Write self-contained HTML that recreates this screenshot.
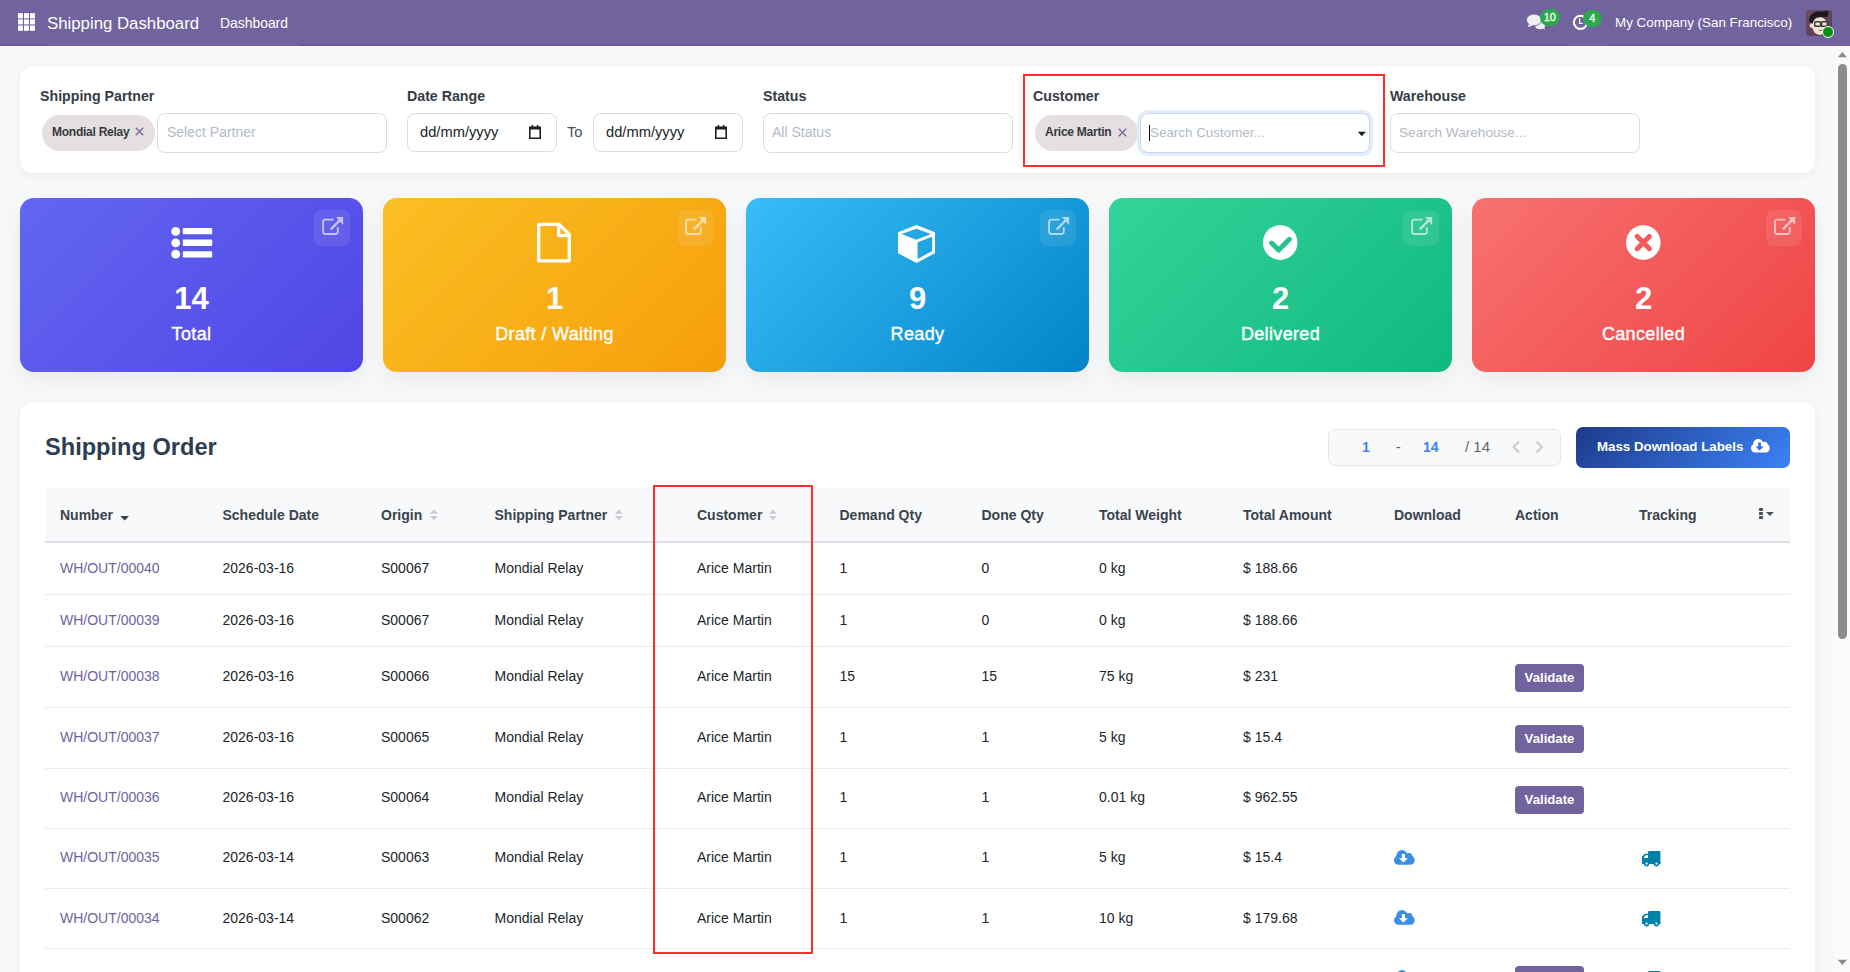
<!DOCTYPE html>
<html><head><meta charset="utf-8">
<style>
*{box-sizing:border-box;margin:0;padding:0}
html,body{width:1850px;height:972px;overflow:hidden}
body{font-family:"Liberation Sans",sans-serif;background:#f7f8fa;position:relative;color:#212529}
.a{position:absolute;white-space:nowrap}
.nav{position:absolute;left:0;top:0;width:1850px;height:46px;background:#71639e}
.navline{position:absolute;top:45px;height:1px;background:#5f5289}
.wl{position:absolute;left:0;top:46px;width:1835px;height:1px;background:#fff}
.card{position:absolute;background:#fff;border-radius:12px;box-shadow:0 2px 8px rgba(0,0,0,0.05)}
.lbl{position:absolute;font-weight:bold;font-size:14.2px;line-height:1;color:#353c46}
.inp{position:absolute;border:1px solid #d9dde3;border-radius:8px;background:#fff;height:40px}
.ph{position:absolute;font-size:14px;line-height:1;color:#b3bac4}
.chip{position:absolute;background:#e6dfdf;border-radius:18px;height:36px}
.chip span{position:absolute;font-weight:bold;font-size:12px;letter-spacing:-0.25px;line-height:1;color:#343a40}
.chip i{position:absolute;font-style:normal;color:#7d72a8}
.stat{position:absolute;top:198px;width:343px;height:174px;border-radius:14px;box-shadow:0 8px 22px rgba(0,0,0,0.06)}
.stat .num{position:absolute;left:0;width:343px;text-align:center;font-weight:bold;font-size:31px;line-height:1;color:#fff;top:284px}
.stat .tl{position:absolute;left:0;width:343px;text-align:center;font-weight:normal;font-size:18px;letter-spacing:0.35px;line-height:1;color:#fff;-webkit-text-stroke:0.4px #fff}
.ext{position:absolute;left:294px;top:12px;width:36px;height:36px;border-radius:8px;background:rgba(255,255,255,0.09)}
.scroll{position:absolute;left:1835px;top:47px;width:15px;height:925px;background:#fafafa}

.th{position:absolute;font-weight:bold;font-size:14px;line-height:1;color:#3a434d;top:508px}
.td{position:absolute;font-size:14px;line-height:1;color:#212529;white-space:nowrap}
.lnk{color:#71639e}
.rb{position:absolute;left:45px;width:1745px;height:1px;background:#e9ecef}
.vbtn{position:absolute;left:1515px;width:69px;height:28px;border-radius:4px;background:#71639e;color:#fff;font-weight:bold;font-size:13.2px;line-height:28px;text-align:center}
</style></head>
<body>
<!-- NAVBAR -->
<div class="nav">
  <svg class="a" style="left:18px;top:13px" width="17" height="18" viewBox="0 0 17 18">
    <g fill="rgba(255,255,255,0.4)"><rect x="0" y="0.2" width="4.9" height="17.5"/><rect x="6" y="0.2" width="4.9" height="17.5"/><rect x="12" y="0.2" width="4.9" height="17.5"/></g>
    <g fill="#fff">
      <rect x="0" y="0.2" width="4.9" height="4.8"/><rect x="6" y="0.2" width="4.9" height="4.8"/><rect x="12" y="0.2" width="4.9" height="4.8"/>
      <rect x="0" y="6.6" width="4.9" height="4.4"/><rect x="6" y="6.6" width="4.9" height="4.4"/><rect x="12" y="6.6" width="4.9" height="4.4"/>
      <rect x="0" y="12.8" width="4.9" height="4.9"/><rect x="6" y="12.8" width="4.9" height="4.9"/><rect x="12" y="12.8" width="4.9" height="4.9"/>
    </g>
  </svg>
  <div class="a" style="left:47px;top:16px;font-size:16.8px;line-height:1;color:#fff">Shipping Dashboard</div>
  <div class="a" style="left:220px;top:16.5px;font-size:13.9px;line-height:1;color:#fff">Dashboard</div>
  <div class="a" style="left:1615px;top:16px;font-size:13.4px;line-height:1;color:#fff">My Company (San Francisco)</div>
  <svg class="a" style="left:1526px;top:13px" width="20" height="18" viewBox="0 0 20 18">
    <g fill="#f1eff6">
      <ellipse cx="14" cy="12.6" rx="5" ry="3.6"/>
      <path d="M15.5,14L18.8,16.9L18.2,12.5Z"/>
      <ellipse cx="8" cy="6.9" rx="7.6" ry="5.9" stroke="#71639e" stroke-width="0.9"/>
      <path d="M3,11L1.8,14.2L7,12.4Z"/>
    </g>
  </svg>
  <div class="a" style="left:1540px;top:9px;width:19.5px;height:17px;border-radius:9px;background:#2ba84a;color:#fff;font-size:11px;font-weight:normal;line-height:17px;text-align:center;-webkit-text-stroke:0.3px #fff">10</div>
  <svg class="a" style="left:1572px;top:13px" width="18" height="19" viewBox="0 0 18 19">
    <circle cx="8.5" cy="9.3" r="6.6" fill="none" stroke="#fff" stroke-width="2.1"/>
    <path d="M7.6,5.2V10.4H10.6" fill="none" stroke="#fff" stroke-width="1.2"/>
  </svg>
  <div class="a" style="left:1583px;top:10px;width:18.5px;height:16.5px;border-radius:9px;background:#2ba84a;color:#fff;font-size:11px;font-weight:normal;line-height:16.5px;text-align:center;-webkit-text-stroke:0.3px #fff">4</div>
  <svg class="a" style="left:1806px;top:10px" width="26" height="26" viewBox="0 0 26 26">
    <defs><linearGradient id="avbg" x1="0" y1="0" x2="1" y2="1"><stop offset="0" stop-color="#704a66"/><stop offset="1" stop-color="#573a55"/></linearGradient></defs>
    <rect width="26" height="26" rx="3" fill="url(#avbg)"/>
    <ellipse cx="5.6" cy="15.5" rx="2" ry="2.6" fill="#f3d9c4"/>
    <ellipse cx="13.8" cy="16" rx="7.6" ry="9" fill="#f7e2d0"/>
    <path d="M3.2,12.5C2.5,6 6.5,2 12.5,1.6C16,1.4 19,1.8 22,0.8C22.6,3 22.3,5.5 20.8,7.3C18,6.8 14,6.8 10.5,7.6C8.5,8.3 7.3,10 6.8,13.5C5.5,13 4.2,12.8 3.2,12.5Z" fill="#1a1a1e"/>
    <rect x="8.8" y="11.8" width="5.8" height="4.4" rx="0.8" fill="#e8e4e2" stroke="#3a3a3c" stroke-width="1.4"/>
    <rect x="15.6" y="11.8" width="5.6" height="4.4" rx="0.8" fill="#e8e4e2" stroke="#3a3a3c" stroke-width="1.4"/>
    <path d="M12.5,19.8C14,20.8 16,20.8 17.5,19.6" fill="none" stroke="#7a5a50" stroke-width="0.9"/>
  </svg>
  <div class="a" style="left:1822px;top:26px;width:12px;height:12px;border-radius:50%;background:#088f10;border:1.3px solid #fff"></div>

</div>
<div class="navline" style="left:0;width:47px"></div>
<div class="navline" style="left:299px;width:1268px"></div><div class="navline" style="left:1609px;width:191px"></div>
<div class="wl"></div>

<!-- FILTER CARD -->
<div class="card" style="left:20px;top:66px;width:1795px;height:107px"></div>
<div class="lbl" style="left:40px;top:89px">Shipping Partner</div>
<div class="chip" style="left:42px;top:115px;width:113px"><span style="left:10px;top:11px">Mondial Relay</span><svg style="position:absolute;left:93px;top:12px" width="9" height="9" viewBox="0 0 9 9"><path d="M0.8,0.8L8.2,8.2M8.2,0.8L0.8,8.2" stroke="#7d72a8" stroke-width="1.6"/></svg></div>
<div class="inp" style="left:157px;top:113px;width:230px"></div>
<div class="ph" style="left:167px;top:125px">Select Partner</div>

<div class="lbl" style="left:407px;top:89px">Date Range</div>
<div class="inp" style="left:407px;top:113px;width:150px;height:39px"></div>
<div class="a" style="left:420px;top:125px;font-size:14.7px;line-height:1;color:#212529">dd/mm/yyyy</div>
<div class="a" style="left:567px;top:125px;font-size:14.7px;line-height:1;color:#495057">To</div>
<div class="inp" style="left:593px;top:113px;width:150px;height:39px"></div>
<div class="a" style="left:606px;top:125px;font-size:14.7px;line-height:1;color:#212529">dd/mm/yyyy</div>

<div class="lbl" style="left:763px;top:89px">Status</div>
<div class="inp" style="left:763px;top:113px;width:250px"></div>
<div class="ph" style="left:772px;top:125px">All Status</div>

<div class="lbl" style="left:1033px;top:89px">Customer</div>
<div class="chip" style="left:1035px;top:115px;width:103px"><span style="left:10px;top:11px">Arice Martin</span><svg style="position:absolute;left:83px;top:13px" width="9" height="9" viewBox="0 0 9 9"><path d="M0.8,0.8L8.2,8.2M8.2,0.8L0.8,8.2" stroke="#7d72a8" stroke-width="1.6"/></svg></div>
<div class="inp" style="left:1140px;top:113px;width:230px;border-color:#c9d6ea;box-shadow:0 0 0 3px #e3eefb"></div>
<div class="ph" style="left:1150px;top:126px;font-size:13.4px">Search Customer...</div>


<svg class="a" style="left:529px;top:125px" width="12" height="14" viewBox="0 0 12 14"><path d="M0,1.5H12V14H0Z M1.6,4.6V12.4H10.4V4.6Z" fill="#1f1f1f" fill-rule="evenodd"/><rect x="2.6" y="0" width="1.6" height="2" fill="#1f1f1f"/><rect x="7.8" y="0" width="1.6" height="2" fill="#1f1f1f"/></svg>
<svg class="a" style="left:715px;top:125px" width="12" height="14" viewBox="0 0 12 14"><path d="M0,1.5H12V14H0Z M1.6,4.6V12.4H10.4V4.6Z" fill="#1f1f1f" fill-rule="evenodd"/><rect x="2.6" y="0" width="1.6" height="2" fill="#1f1f1f"/><rect x="7.8" y="0" width="1.6" height="2" fill="#1f1f1f"/></svg>
<svg class="a" style="left:1357px;top:131px" width="10" height="6" viewBox="0 0 10 6"><path d="M0.8,0.8H8.8L4.8,5.2Z" fill="#1f1f1f"/></svg>
<div class="a" style="left:1149px;top:125px;width:1.3px;height:16px;background:#111"></div>
<div class="lbl" style="left:1390px;top:89px">Warehouse</div>
<div class="inp" style="left:1390px;top:113px;width:250px"></div>
<div class="ph" style="left:1399px;top:126px;font-size:13.6px">Search Warehouse...</div>

<div class="a" style="left:1023px;top:74px;width:362px;height:93px;border:2px solid #ff2d2d"></div>

<!-- STAT CARDS -->
<svg width="0" height="0" style="position:absolute">
  <defs>
    <g id="cloud"><circle cx="8" cy="5.6" r="5.6"/><circle cx="15" cy="6.2" r="3.3"/><rect x="0" y="5.6" width="20.7" height="9.2" rx="4.6"/>
      <path fill="#fff" d="M7.9,3.9H11V8.2H14L9.45,12.6L4.9,8.2H7.9Z"/></g>
    <g id="truck"><rect x="6" y="0" width="12.4" height="12.4" rx="1.2"/><path d="M0,5.6L2.9,2.8H6.5V12.4H0Z"/><path fill="#fff" d="M1.6,6.9L3.5,4.2H6V6.9Z"/>
      <rect x="0" y="10.8" width="18.4" height="2.2"/><circle cx="4.6" cy="12.6" r="2.8"/><circle cx="14.5" cy="12.6" r="2.8"/>
      <circle fill="#fff" cx="4.6" cy="12.6" r="1.1"/><circle fill="#fff" cx="14.5" cy="12.6" r="1.1"/></g>
    <g id="ext" fill="none" stroke="rgba(255,255,255,0.62)">
      <path d="M19.5,9.6H11.3A2.2,2.2 0 0 0 9.1,11.8V21.8A2.2,2.2 0 0 0 11.3,24H21.6A2.2,2.2 0 0 0 23.8,21.8V17.2" stroke-width="1.9"/>
      <path d="M16.8,19.3L25.5,10.6" stroke-width="2.4"/>
      <path d="M22,7H29.1V14.9Z" fill="rgba(255,255,255,0.62)" stroke="none"/>
    </g>
  </defs>
</svg>
<div class="stat" style="left:20px;background:linear-gradient(135deg,#6366f1,#4f46e5)">
  <div class="ext"><svg width="36" height="36"><use href="#ext"/></svg></div>
  <svg class="a" style="left:151px;top:29px" width="42" height="32" viewBox="0 0 42 32"><g fill="#fff">
    <circle cx="4.7" cy="4.4" r="4.4"/><circle cx="4.7" cy="15.8" r="4.4"/><circle cx="4.7" cy="27.2" r="4.4"/>
    <rect x="11.8" y="1" width="29.4" height="6.3" rx="0.8"/><rect x="11.8" y="12.6" width="29.4" height="6.3" rx="0.8"/><rect x="11.8" y="24.2" width="29.4" height="6.3" rx="0.8"/></g></svg>
  <div class="num" style="top:85px">14</div><div class="tl" style="top:126.5px">Total</div>
</div>
<div class="stat" style="left:383px;background:linear-gradient(135deg,#fbbf24,#f59e0b)">
  <div class="ext"><svg width="36" height="36"><use href="#ext"/></svg></div>
  <svg class="a" style="left:154px;top:24px" width="35" height="41" viewBox="0 0 35 41"><path fill="none" stroke="#fff" stroke-width="3.3" stroke-linejoin="round" d="M1.7,2.3H22L32.3,12.4V38.8H1.7Z M21.7,2.5V13.5H32"/></svg>
  <div class="num" style="top:85px">1</div><div class="tl" style="top:126.5px">Draft / Waiting</div>
</div>
<div class="stat" style="left:746px;background:linear-gradient(135deg,#38bdf8,#0284c7)">
  <div class="ext"><svg width="36" height="36"><use href="#ext"/></svg></div>
  <svg class="a" style="left:152px;top:27px" width="37" height="38" viewBox="0 0 37 38"><path fill="#fff" fill-rule="evenodd" d="M18.5,0L37,7.3V28.2L18.5,38L0,28.2V7.3Z M3.5,9L18.4,3.7L32.8,9L18.4,14.8Z M19.6,17.2L34.2,11.8V25.9L19.6,34.1Z"/></svg>
  <div class="num" style="top:85px">9</div><div class="tl" style="top:126.5px">Ready</div>
</div>
<div class="stat" style="left:1109px;background:linear-gradient(135deg,#34d399,#10b981)">
  <div class="ext"><svg width="36" height="36"><use href="#ext"/></svg></div>
  <svg class="a" style="left:153px;top:26px" width="36" height="36" viewBox="0 0 36 36"><circle cx="18.2" cy="18.6" r="17.3" fill="#fff"/><path d="M9.6,19.1L16.6,26.1L27.4,15.3" fill="none" stroke="#27c58a" stroke-width="5" stroke-linecap="round" stroke-linejoin="round"/></svg>
  <div class="num" style="top:85px">2</div><div class="tl" style="top:126.5px">Delivered</div>
</div>
<div class="stat" style="left:1472px;background:linear-gradient(135deg,#f87171,#ef4444)">
  <div class="ext"><svg width="36" height="36"><use href="#ext"/></svg></div>
  <svg class="a" style="left:153px;top:26px" width="36" height="36" viewBox="0 0 36 36"><circle cx="18.3" cy="18.6" r="17.3" fill="#fff"/><path d="M12.2,12.5L24.4,24.7M24.4,12.5L12.2,24.7" fill="none" stroke="#f45b5b" stroke-width="5" stroke-linecap="round"/></svg>
  <div class="num" style="top:85px">2</div><div class="tl" style="top:126.5px">Cancelled</div>
</div>
<!-- TABLE CARD -->
<div class="card" style="left:20px;top:402px;width:1795px;height:600px"></div>
<div class="a" style="left:45px;top:436px;font-weight:bold;font-size:23.6px;line-height:1;color:#2c3e50">Shipping Order</div>
<div class="a" style="left:1328px;top:429px;width:233px;height:37px;border:1px solid #e3e6ea;border-radius:7px;background:#f8f9fa"></div>
<div class="a" style="left:1362px;top:440px;font-size:14px;line-height:1;color:#3b82f6;font-weight:bold">1</div>
<div class="a" style="left:1396px;top:440px;font-size:14px;line-height:1;color:#555">-</div>
<div class="a" style="left:1423px;top:440px;font-size:14px;line-height:1;color:#3b82f6;font-weight:bold">14</div>
<div class="a" style="left:1465px;top:439px;font-size:15px;line-height:1;color:#666">/ 14</div>
<svg class="a" style="left:1511px;top:440px" width="34" height="14" viewBox="0 0 34 14"><path d="M8,1.5L2.5,7L8,12.5M25.5,1.5L31,7L25.5,12.5" fill="none" stroke="#c9ccd0" stroke-width="2.2"/></svg>
<div class="a" style="left:1576px;top:427px;width:214px;height:41px;border-radius:7px;background:linear-gradient(135deg,#1e3a8a,#3b82f6)"></div>
<div class="a" style="left:1597px;top:440px;font-weight:bold;font-size:13.3px;line-height:1;color:#fff">Mass Download Labels</div>
<svg class="a" style="left:1751px;top:439.3px" width="19" height="13.6" viewBox="0 0 21 15" preserveAspectRatio="none"><g fill="#fff"><circle cx="8" cy="5.6" r="5.6"/><circle cx="15" cy="6.2" r="3.3"/><rect x="0" y="5.6" width="20.7" height="9.2" rx="4.6"/></g><path fill="#3170dc" d="M7.9,3.9H11V8.2H14L9.45,12.6L4.9,8.2H7.9Z"/></svg>

<div class="a" style="left:45px;top:488px;width:1745px;height:53px;background:#f8f9fa"></div>
<div class="a" style="left:45px;top:541px;width:1745px;height:2px;background:#dee2e6"></div>
<div class="th" style="left:60px">Number</div>
<svg class="a" style="left:120px;top:515px" width="10" height="6" viewBox="0 0 10 6"><path d="M0.3,0.9H9L4.65,5.4Z" fill="#3a3f47"/></svg>
<div class="th" style="left:222.5px">Schedule Date</div>
<div class="th" style="left:381px">Origin</div>
<svg class="a" style="left:429px;top:509px" width="9" height="12" viewBox="0 0 9 12"><path d="M0.9,4.7H8.9L4.9,0.4Z M0.9,7H8.9L4.9,11.2Z" fill="#c8cbcf"/></svg>
<div class="th" style="left:494.5px">Shipping Partner</div>
<svg class="a" style="left:614px;top:509px" width="9" height="12" viewBox="0 0 9 12"><path d="M0.9,4.7H8.9L4.9,0.4Z M0.9,7H8.9L4.9,11.2Z" fill="#c8cbcf"/></svg>
<div class="th" style="left:697px">Customer</div>
<svg class="a" style="left:768px;top:509px" width="9" height="12" viewBox="0 0 9 12"><path d="M0.9,4.7H8.9L4.9,0.4Z M0.9,7H8.9L4.9,11.2Z" fill="#c8cbcf"/></svg>
<div class="th" style="left:839.5px">Demand Qty</div>
<div class="th" style="left:981.5px">Done Qty</div>
<div class="th" style="left:1099px">Total Weight</div>
<div class="th" style="left:1243px">Total Amount</div>
<div class="th" style="left:1394px">Download</div>
<div class="th" style="left:1515px">Action</div>
<div class="th" style="left:1639px">Tracking</div>
<svg class="a" style="left:1758px;top:507px" width="17" height="13" viewBox="0 0 17 13"><g fill="#4a5058"><rect x="1.1" y="1" width="3.8" height="3"/><rect x="1.1" y="5" width="3.8" height="3"/><rect x="1.1" y="9" width="3.8" height="3"/><path d="M8,5H15.8L11.9,9Z"/></g></svg>
<div class="rb" style="top:594px"></div>
<div class="td lnk" style="left:60px;top:561px">WH/OUT/00040</div>
<div class="td" style="left:222.5px;top:561px">2026-03-16</div>
<div class="td" style="left:381px;top:561px">S00067</div>
<div class="td" style="left:494.5px;top:561px">Mondial Relay</div>
<div class="td" style="left:697px;top:561px">Arice Martin</div>
<div class="td" style="left:839.5px;top:561px">1</div>
<div class="td" style="left:981.5px;top:561px">0</div>
<div class="td" style="left:1099px;top:561px">0 kg</div>
<div class="td" style="left:1243px;top:561px">$ 188.66</div>
<div class="rb" style="top:646px"></div>
<div class="td lnk" style="left:60px;top:613px">WH/OUT/00039</div>
<div class="td" style="left:222.5px;top:613px">2026-03-16</div>
<div class="td" style="left:381px;top:613px">S00067</div>
<div class="td" style="left:494.5px;top:613px">Mondial Relay</div>
<div class="td" style="left:697px;top:613px">Arice Martin</div>
<div class="td" style="left:839.5px;top:613px">1</div>
<div class="td" style="left:981.5px;top:613px">0</div>
<div class="td" style="left:1099px;top:613px">0 kg</div>
<div class="td" style="left:1243px;top:613px">$ 188.66</div>
<div class="rb" style="top:707px"></div>
<div class="td lnk" style="left:60px;top:669px">WH/OUT/00038</div>
<div class="td" style="left:222.5px;top:669px">2026-03-16</div>
<div class="td" style="left:381px;top:669px">S00066</div>
<div class="td" style="left:494.5px;top:669px">Mondial Relay</div>
<div class="td" style="left:697px;top:669px">Arice Martin</div>
<div class="td" style="left:839.5px;top:669px">15</div>
<div class="td" style="left:981.5px;top:669px">15</div>
<div class="td" style="left:1099px;top:669px">75 kg</div>
<div class="td" style="left:1243px;top:669px">$ 231</div>
<div class="vbtn" style="top:664px">Validate</div>
<div class="rb" style="top:768px"></div>
<div class="td lnk" style="left:60px;top:730px">WH/OUT/00037</div>
<div class="td" style="left:222.5px;top:730px">2026-03-16</div>
<div class="td" style="left:381px;top:730px">S00065</div>
<div class="td" style="left:494.5px;top:730px">Mondial Relay</div>
<div class="td" style="left:697px;top:730px">Arice Martin</div>
<div class="td" style="left:839.5px;top:730px">1</div>
<div class="td" style="left:981.5px;top:730px">1</div>
<div class="td" style="left:1099px;top:730px">5 kg</div>
<div class="td" style="left:1243px;top:730px">$ 15.4</div>
<div class="vbtn" style="top:725px">Validate</div>
<div class="rb" style="top:828px"></div>
<div class="td lnk" style="left:60px;top:790px">WH/OUT/00036</div>
<div class="td" style="left:222.5px;top:790px">2026-03-16</div>
<div class="td" style="left:381px;top:790px">S00064</div>
<div class="td" style="left:494.5px;top:790px">Mondial Relay</div>
<div class="td" style="left:697px;top:790px">Arice Martin</div>
<div class="td" style="left:839.5px;top:790px">1</div>
<div class="td" style="left:981.5px;top:790px">1</div>
<div class="td" style="left:1099px;top:790px">0.01 kg</div>
<div class="td" style="left:1243px;top:790px">$ 962.55</div>
<div class="vbtn" style="top:786px">Validate</div>
<div class="rb" style="top:888px"></div>
<div class="td lnk" style="left:60px;top:850px">WH/OUT/00035</div>
<div class="td" style="left:222.5px;top:850px">2026-03-14</div>
<div class="td" style="left:381px;top:850px">S00063</div>
<div class="td" style="left:494.5px;top:850px">Mondial Relay</div>
<div class="td" style="left:697px;top:850px">Arice Martin</div>
<div class="td" style="left:839.5px;top:850px">1</div>
<div class="td" style="left:981.5px;top:850px">1</div>
<div class="td" style="left:1099px;top:850px">5 kg</div>
<div class="td" style="left:1243px;top:850px">$ 15.4</div>
<svg class="a" style="left:1394px;top:850px" width="21" height="15" viewBox="0 0 21 15"><use href="#cloud" fill="#3a8ee6"/></svg>
<svg class="a" style="left:1642px;top:851px" width="19" height="16" viewBox="0 0 19 16"><use href="#truck" fill="#0180aa"/></svg>
<div class="rb" style="top:948px"></div>
<div class="td lnk" style="left:60px;top:911px">WH/OUT/00034</div>
<div class="td" style="left:222.5px;top:911px">2026-03-14</div>
<div class="td" style="left:381px;top:911px">S00062</div>
<div class="td" style="left:494.5px;top:911px">Mondial Relay</div>
<div class="td" style="left:697px;top:911px">Arice Martin</div>
<div class="td" style="left:839.5px;top:911px">1</div>
<div class="td" style="left:981.5px;top:911px">1</div>
<div class="td" style="left:1099px;top:911px">10 kg</div>
<div class="td" style="left:1243px;top:911px">$ 179.68</div>
<svg class="a" style="left:1394px;top:910px" width="21" height="15" viewBox="0 0 21 15"><use href="#cloud" fill="#3a8ee6"/></svg>
<svg class="a" style="left:1642px;top:911px" width="19" height="16" viewBox="0 0 19 16"><use href="#truck" fill="#0180aa"/></svg>
<div class="td lnk" style="left:60px;top:971px">WH/OUT/00033</div>
<div class="td" style="left:222.5px;top:971px">2026-03-14</div>
<div class="td" style="left:381px;top:971px">S00061</div>
<div class="td" style="left:494.5px;top:971px">Mondial Relay</div>
<div class="td" style="left:697px;top:971px">Arice Martin</div>
<div class="td" style="left:839.5px;top:971px">1</div>
<div class="td" style="left:981.5px;top:971px">1</div>
<div class="td" style="left:1099px;top:971px">5 kg</div>
<div class="td" style="left:1243px;top:971px">$ 15.4</div>
<svg class="a" style="left:1394px;top:970px" width="21" height="15" viewBox="0 0 21 15"><use href="#cloud" fill="#3a8ee6"/></svg>
<div class="vbtn" style="top:966px">Validate</div>
<svg class="a" style="left:1642px;top:971px" width="19" height="16" viewBox="0 0 19 16"><use href="#truck" fill="#0180aa"/></svg>
<div class="a" style="left:653px;top:485px;width:160px;height:469px;border:2px solid #ff2d2d"></div>

<!-- SCROLLBAR -->
<div class="scroll"></div>
<svg class="a" style="left:1837px;top:51px" width="11" height="7" viewBox="0 0 11 7"><path d="M0.8,6.2H10L5.4,1Z" fill="#8a8a8a"/></svg>
<div class="a" style="left:1838px;top:64px;width:9px;height:575px;border-radius:4.5px;background:#8c8c8c"></div>
<svg class="a" style="left:1837px;top:959px" width="11" height="7" viewBox="0 0 11 7"><path d="M0.8,0.8H10L5.4,6Z" fill="#8a8a8a"/></svg>

</body></html>
